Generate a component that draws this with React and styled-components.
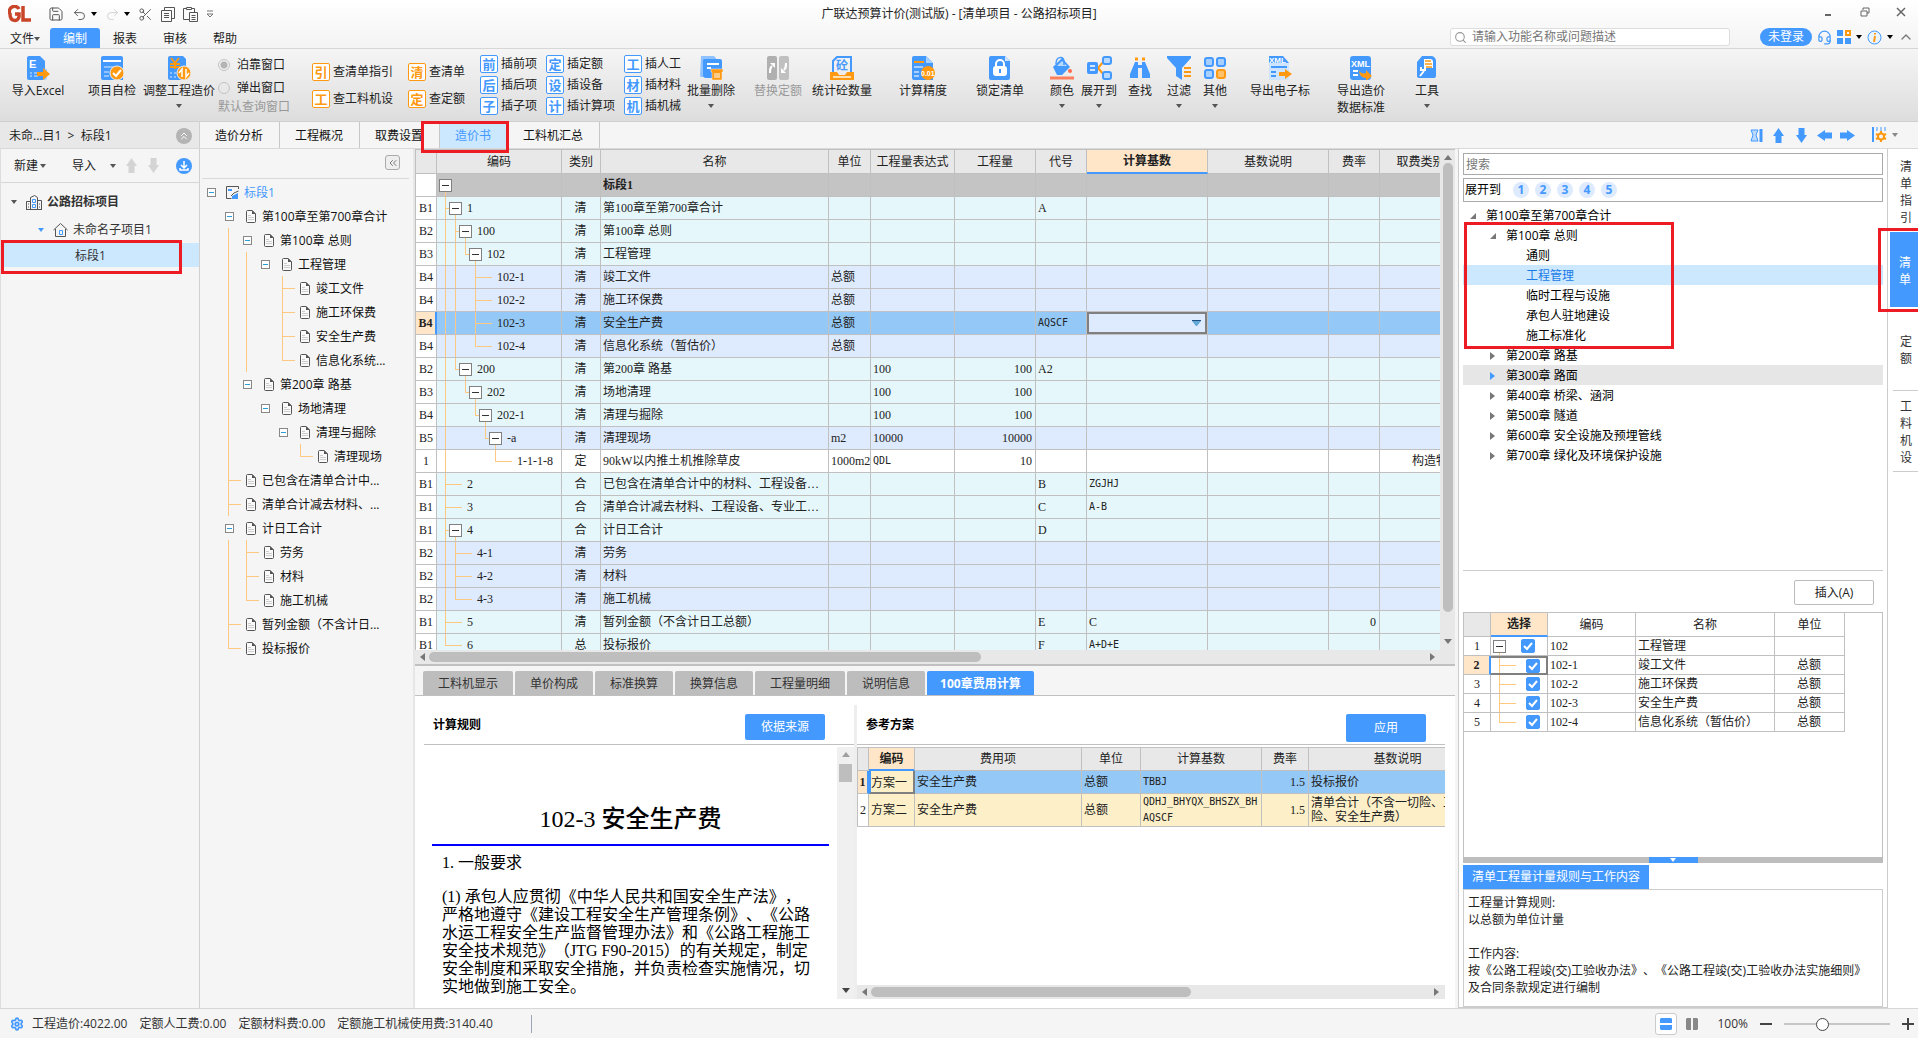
import React, { useState } from "react";
import styled, { createGlobalStyle, css } from "styled-components";
import {
  ChevronsLeft, ChevronsUp, ChevronUp, Headset, Redo2, Save, Scissors, Search, Settings, Undo2,
} from "lucide-react";

const BLUE = "#4499ff";
const ORANGE = "#ff9912";
const LINE = "#ffc880";
const UI = `"Open Sans", "Noto Sans CJK SC", sans-serif`;
const SONG = `"Liberation Serif", "Noto Sans CJK SC", serif`;

const GlobalStyle = createGlobalStyle`
  * { box-sizing: border-box; }
  body {
    margin: 0;
    overflow: hidden;
    font: 12px/16px ${UI};
    color: #222;
    text-spacing-trim: space-all;
  }
  button, input, select { font: inherit; color: inherit; padding: 0; margin: 0; border: 0; background: none; }
  button { white-space: nowrap; cursor: pointer; }
  svg { display: block; flex: none; }
  h1, h2, p, ul { margin: 0; padding: 0; font-weight: 400; list-style: none; }
`;

const Page = styled.div`
  display: flex;
  flex-direction: column;
  height: 100vh;
  overflow: hidden;
  background: #f5f5f5;
`;
const Marker = styled.div`
  position: absolute;
  border: 3px solid #ed1c24;
  pointer-events: none;
  z-index: 5;
`;
const Caret = styled.i`
  flex: none;
  width: 0;
  height: 0;
  border: 3px solid transparent;
  border-bottom-width: 0;
  border-top: 4px solid ${p => p.$color || "#555"};
`;

/* ---- top ---- */
const TopArea = styled.header`
  background: linear-gradient(#fff, #f3f3f3);
  border-bottom: 1px solid #d6d6d6;
`;
const TitleBar = styled.div`
  display: grid;
  grid-template-columns: 1fr auto 1fr;
  align-items: center;
  height: 28px;
`;
const QuickBar = styled.div`
  display: flex;
  align-items: center;
  height: 25px;
  padding-left: 8px;
  gap: 8px;
  color: #555;
  > svg { margin-right: 8px; }
`;
const QuickButton = styled.button`
  display: flex;
  align-items: center;
  gap: 4px;
  color: ${p => (p.disabled ? "#d0d0d0" : "#555")};
`;
const WindowButtons = styled.div`
  display: flex;
  justify-content: flex-end;
  align-items: center;
  gap: 26px;
  padding-right: 12px;
  padding-bottom: 4px;
`;
const MenuBar = styled.nav`
  display: flex;
  align-items: stretch;
  height: 20px;
`;
const MenuItem = styled.button`
  display: flex;
  align-items: center;
  justify-content: center;
  width: 50px;
  padding-top: 2px;
  border-radius: 3px 3px 0 0;
  background: ${p => (p.$active ? BLUE : "none")};
  color: ${p => (p.$active ? "#fff" : "#222")};
`;
const HelpSearch = styled.label`
  display: flex;
  align-items: center;
  gap: 5px;
  width: 280px;
  height: 18px;
  margin: 0 30px 0 auto;
  padding-left: 3px;
  background: #fff;
  border: 1px solid #ddd;
  border-radius: 3px;
  color: #999;
  input { flex: 1; outline: none; }
  input::placeholder { color: #777; }
`;
const Account = styled.div`
  display: flex;
  align-items: center;
  gap: 5px;
  padding-right: 4px;
  height: 18px;
`;
const LoginButton = styled.button`
  width: 52px;
  height: 18px;
  border-radius: 9px;
  background: ${BLUE};
  color: #fff;
`;
const IconButton = styled.button`
  display: flex;
  align-items: center;
  gap: 5px;
  color: ${p => p.$color || BLUE};
`;

/* ---- ribbon ---- */
const Ribbon = styled.div`
  display: flex;
  height: 73px;
  background: linear-gradient(#f5f5f5, #dddddd);
  border-bottom: 1px solid #cfcfcf;
`;
const BigButton = styled.button`
  display: flex;
  flex-direction: column;
  align-items: center;
  flex: none;
  width: ${p => p.$width}px;
  margin-left: ${p => p.$gap || 0}px;
  padding-top: 7px;
  line-height: 17px;
  color: ${p => (p.disabled ? "#999" : "#222")};
  span { margin-top: 2px; white-space: pre; }
  i { margin-top: 5px; }
`;
const DockGroup = styled.div`
  display: flex;
  flex-direction: column;
  width: 87px;
  padding: 4px 0 0 8px;
  color: #999;
  white-space: nowrap;
`;
const DockOption = styled.label`
  display: flex;
  align-items: center;
  gap: 7px;
  height: 24px;
  margin-bottom: -1px;
  color: #222;
  input {
    appearance: none;
    width: 12px;
    height: 12px;
    border: 1px solid #c4c4c4;
    border-radius: 50%;
  }
  input:checked { background: radial-gradient(#b4b4b4 3px, transparent 4px); }
`;
const ToolGrid = styled.div`
  display: grid;
  grid-template-columns: ${p => p.$columns};
  grid-auto-rows: ${p => p.$row}px;
  align-content: center;
  justify-items: start;
  align-items: center;
  margin-left: 15px;
`;
const ToolButton = styled.button`
  display: flex;
  align-items: center;
  gap: 3px;
  b {
    width: 18px;
    height: 18px;
    border: 1px solid ${p => p.$color};
    border-radius: 2px;
    background: #fff;
    color: ${p => p.$color};
    font: 700 13px/15px "Noto Sans CJK SC", sans-serif;
  }
`;

/* ---- page tabs ---- */
const SubHeader = styled.div`
  display: flex;
  height: 27px;
  border-bottom: 1px solid #d9d9d9;
`;
const Crumb = styled.div`
  display: flex;
  align-items: center;
  justify-content: space-between;
  width: 200px;
  padding: 1px 7px 0 9px;
  background: #e8e8e8;
  border-right: 1px solid #d0d0d0;
  white-space: pre;
`;
const RoundButton = styled.button`
  display: flex;
  align-items: center;
  justify-content: center;
  width: 16px;
  height: 16px;
  border-radius: 50%;
  background: ${p => p.$color};
  color: #fff;
`;
const TabSlot = styled.div`
  position: relative;
  display: flex;
`;
const PageTab = styled.button`
  padding: 2px 16px 0 15px;
  border-right: 1px solid ${p => (p.$active ? "#cce8ff" : "#c8c8c8")};
  background: ${p => (p.$active ? "#cce8ff" : "none")};
  color: ${p => (p.$active ? BLUE : "#111")};
`;
const ArrowTools = styled.div`
  display: flex;
  align-items: center;
  gap: 8px;
  margin-left: auto;
  padding-right: 20px;
`;

const Body = styled.main`
  display: flex;
  flex: 1;
  min-height: 0;
`;

/* ---- project panel ---- */
const ProjectPanel = styled.aside`
  flex: none;
  width: 200px;
  border-left: 1px solid #ddd;
  border-right: 1px solid #d0d0d0;
`;
const ProjectTools = styled.div`
  display: flex;
  align-items: center;
  height: 34px;
  padding: 0 7px 0 13px;
  border-bottom: 1px solid #d6d6d6;
  margin-bottom: 4px;
`;
const ProjectButton = styled.button`
  display: flex;
  align-items: center;
  gap: ${p => p.$gap}px;
  margin-right: ${p => p.$after}px;
`;
const ProjectRow = styled.div`
  position: relative;
  display: flex;
  align-items: center;
  gap: 5px;
  height: ${p => (p.$active ? 24 : 28)}px;
  padding-top: 2px;
  padding-left: ${p => p.$indent}px;
  background: ${p => (p.$active ? "#cce8ff" : "none")};
  font-weight: ${p => (p.$bold ? 600 : 400)};
  color: #333;
  svg { margin-left: 4px; }
`;

/* ---- chapter tree ---- */
const ChapterPanel = styled.aside`
  flex: none;
  width: 215px;
  padding: 0 4px 0 2px;
  border-right: 2px solid #e6e6e6;
`;
const ChapterTop = styled.div`
  display: flex;
  justify-content: flex-end;
  align-items: center;
  height: 30px;
  padding: 0 9px 2px 0;
  margin-bottom: 1px;
  border-bottom: 1px solid #d9d9d9;
`;
const CollapseButton = styled.button`
  display: flex;
  align-items: center;
  justify-content: center;
  width: 15px;
  height: 15px;
  border: 1px solid #aaa;
  border-radius: 3px;
  background: #eee;
  color: #777;
`;
const ChapterRow = styled.li`
  display: flex;
  align-items: center;
  height: 24px;
  color: ${p => (p.$root ? BLUE : "#111")};
  white-space: nowrap;
  svg { margin-right: ${p => (p.$root ? 5 : 6)}px; }
`;
const ChapterText = styled.span`
  padding-top: 1px;
`;

/* Connector lines of the trees: v = through, tee = branch, end = last branch */
const lineImage = css`
  background-repeat: no-repeat;
  background-image: ${p => (p.$type ? `linear-gradient(${LINE}, ${LINE}), linear-gradient(${LINE}, ${LINE})` : "none")};
  background-position: ${p => p.$x}px 0, ${p => p.$x}px 50%;
  background-size: 1px ${p => (p.$type === "end" ? "50%" : "100%")}, ${p => (p.$type === "v" ? "0 0" : "100% 1px")};
`;
const Guide = styled.span`
  flex: none;
  align-self: stretch;
  width: ${p => p.$width}px;
  ${lineImage}
`;
const ChapterToggle = styled.button`
  flex: none;
  width: 9px;
  height: 9px;
  margin: 0 ${p => (p.$root ? 10 : 12)}px 0 5px;
  border: 1px solid #888;
  background: linear-gradient(#2aa0d8, #2aa0d8) center / 5px 1px no-repeat #fff;
`;

/* ---- centre ---- */
const Center = styled.section`
  display: flex;
  flex-direction: column;
  flex: 1;
  min-width: 0;
  padding-right: 3px;
`;
const GridArea = styled.div`
  display: flex;
  flex: 1;
  min-height: 0;
  border-top: 1px solid #c0c0c0;
`;
const Clip = styled.div`
  flex: 1;
  min-width: 0;
  overflow: hidden;
`;
const Table = styled.table`
  table-layout: fixed;
  width: ${p => p.$width}px;
  border-collapse: separate;
  border-spacing: 0;
  border-left: 1px solid #c0c0c0;
  border-top: ${p => (p.$top ? "1px solid #c0c0c0" : "0")};
  font-family: ${SONG};
  background: #fff;
`;
const Th = styled.th`
  height: ${p => p.$height || 24}px;
  padding: 0;
  border-right: 1px solid #c0c0c0;
  border-bottom: ${p => (p.$active ? `2px solid ${BLUE}` : "1px solid #c0c0c0")};
  background: ${p => (p.$active ? "#ffe6c8" : p.$plain ? "#fff" : "#e8e8e8")};
  font-weight: ${p => (p.$active ? 700 : 400)};
  white-space: nowrap;
  overflow: hidden;
`;
const Tr = styled.tr`
  background: ${p => p.$color || "#fff"};
`;
const Td = styled.td`
  height: ${p => p.$height || 23}px;
  padding: 0 3px 0 2px;
  border-right: 1px solid #c0c0c0;
  border-bottom: 1px solid #c0c0c0;
  text-align: ${p => p.$align || "left"};
  font-weight: ${p => (p.$bold ? 700 : 400)};
  line-height: 14px;
  white-space: ${p => (p.$wrap ? "pre" : "nowrap")};
  overflow: hidden;
  ${p => p.$code && css`font: 10px/16px "DejaVu Sans Mono", monospace;`}
  ${p => p.$focus && css`
    border: 2px solid #808080;
    border-left-color: ${BLUE};
    border-top-width: 0;
    padding-top: 2px;
  `}
`;
const RowHead = styled(Td)`
  padding: 0;
  text-align: center;
  background: ${p => (p.$active ? "#ffe6c8" : "#fff")};
  border-right: ${p => (p.$active ? `2px solid ${BLUE}` : "1px solid #c0c0c0")};
  font-weight: ${p => (p.$active ? 700 : 400)};
`;
const TreeCell = styled.div`
  display: flex;
  align-items: center;
  height: ${p => p.$height}px;
`;
const ToggleSlot = styled.span`
  display: flex;
  align-items: center;
  align-self: stretch;
  flex: none;
  background: linear-gradient(${LINE}, ${LINE}) 6px 100% / 1px 50% no-repeat;
`;
const Toggle = styled.button`
  width: 13px;
  height: 13px;
  border: 1px solid #808080;
  background: linear-gradient(#333, #333) center / 7px 1px no-repeat #fff;
`;
const TreeText = styled.span`
  margin-left: 5px;
`;
const FeeText = styled.span`
  padding-left: 20px;
`;
const CellSelect = styled.select`
  display: block;
  appearance: none;
  width: 100%;
  height: 22px;
  border: 2px solid #808080;
  border-radius: 0;
  background: url("data:image/svg+xml,%3Csvg xmlns='http://www.w3.org/2000/svg' width='9' height='6'%3E%3Cpath d='M0 0h9v1L5 6H4L0 1z' fill='%235fa8d8'/%3E%3Cpath d='M0 0h9v1H0z' fill='%23205080'/%3E%3C/svg%3E") right 4px center no-repeat #deeafd;
`;
const SelectTd = styled(Td)`
  padding: 0;
`;

const VScroll = styled.div`
  display: flex;
  flex-direction: column;
  align-items: center;
  flex: none;
  width: ${p => p.$width}px;
  padding: 4px 0;
  background: ${p => p.$color};
`;
const HScroll = styled.div`
  display: flex;
  align-items: center;
  flex: none;
  height: 14px;
  padding: 0 4px;
  background: #e8e8e8;
`;
const Thumb = styled.div`
  flex: none;
  background: #bebebe;
  border-radius: ${p => (p.$square ? 0 : 5)}px;
  width: ${p => p.$width};
  height: ${p => p.$height};
  margin: ${p => p.$margin};
`;
const Spacer = styled.div`
  flex: 1;
`;

const DetailTabs = styled.div`
  display: flex;
  align-items: flex-end;
  gap: 2px;
  height: 32px;
  flex: none;
  padding-left: 8px;
  border-top: 2px solid #c0c0c0;
  border-bottom: 1px solid #c0c0c0;
`;
const DetailTab = styled.button`
  height: 24px;
  padding: 1px ${p => (p.$active ? 13 : 15)}px 0;
  border-radius: 2px 2px 0 0;
  background: ${p => (p.$active ? BLUE : "#bdbdbd")};
  color: ${p => (p.$active ? "#fff" : "#333")};
  font-weight: ${p => (p.$active ? 700 : 400)};
`;
const Details = styled.div`
  display: flex;
  flex: none;
  height: 312px;
  background: #fff;
  padding-bottom: 9px;
`;
const RulePane = styled.section`
  display: flex;
  flex-direction: column;
  width: 439px;
  flex: none;
`;
const PaneDivider = styled.div`
  flex: none;
  width: 3px;
  margin-top: 9px;
  background: #eee;
`;
const PlanPane = styled.section`
  display: flex;
  flex-direction: column;
  flex: 1;
  min-width: 0;
  margin-right: 10px;
`;
const PaneHead = styled.div`
  display: flex;
  justify-content: space-between;
  align-items: flex-start;
  flex: none;
  height: 49px;
  padding: 18px ${p => p.$right}px 0 9px;
  margin: 0 0 2px ${p => p.$left}px;
  border-bottom: 1px solid #c0c0c0;
  h2 { font-size: 12px; line-height: 22px; font-weight: 700; color: #000; }
`;
const BlueButton = styled.button`
  width: 80px;
  height: ${p => (p.$tall ? 28 : 26)}px;
  border-radius: 2px;
  background: ${BLUE};
  color: #fff;
`;
const DocScroll = styled.div`
  display: flex;
  flex: 1;
  min-height: 0;
`;
const Doc = styled.article`
  flex: 1;
  min-width: 0;
  padding: 54px 8px 0 17px;
  overflow: hidden;
  font: 16px/18px ${SONG};
  color: #000;
  h1 {
    font-size: 24px;
    line-height: 36px;
    font-weight: 500;
    text-align: center;
    padding-bottom: 7px;
    border-bottom: 2px solid #00f;
  }
  p { padding: 0 16px 0 10px; margin: 8px 0 16px; }
  p + p { margin: 0; }
`;

/* ---- right panel ---- */
const ListPanel = styled.aside`
  display: flex;
  flex-direction: column;
  flex: none;
  width: 430px;
  padding: 4px 4px 0;
  background: #fff;
  border: 1px solid #ccc;
  border-top: 0;
`;
const SearchBox = styled.input`
  flex: none;
  height: 22px;
  padding-left: 2px;
  border: 1px solid #aaa;
  &::placeholder { color: #777; }
`;
const ExpandBar = styled.div`
  display: flex;
  align-items: center;
  flex: none;
  gap: 6px;
  height: 24px;
  margin: 3px 0;
  padding-left: 1px;
  border: 1px solid #aaa;
  color: #000;
  span { margin-right: 6px; }
`;
const LevelButton = styled.button`
  width: 16px;
  height: 16px;
  border-radius: 50%;
  background: #deeafd;
  color: ${BLUE};
  font-weight: 700;
  line-height: 16px;
`;
const ListTree = styled.div`
  flex: 1;
  min-height: 0;
  border-bottom: 1px solid #ccc;
`;
const TreeGroup = styled.div`
  position: relative;
`;
const ListRow = styled.div`
  display: flex;
  align-items: center;
  gap: 9px;
  height: 20px;
  padding-top: 2px;
  padding-left: ${p => 6 + p.$level * 20}px;
  background: ${p => p.$color || "none"};
  color: ${p => (p.$active ? "#1a7be8" : "#000")};
`;
const LeafRow = styled(ListRow)`
  padding-left: 63px;
`;
const InsertBar = styled.div`
  display: flex;
  justify-content: flex-end;
  flex: none;
  padding: 9px 9px 7px;
`;
const InsertButton = styled.button`
  width: 80px;
  height: 25px;
  border: 1px solid #bbb;
  border-radius: 2px;
  background: #fff;
`;
const PickArea = styled.div`
  flex: none;
  height: 245px;
  border: 1px solid #c0c0c0;
  border-bottom: 0;
  table { margin-left: -1px; }
`;
const PickCell = styled(Td)`
  ${p => p.$active && css`
    border: 2px solid #808080;
    border-left: 0;
  `}
`;
const PickCheck = styled.input`
  appearance: none;
  width: 14px;
  height: 14px;
  margin-left: ${p => p.$gap}px;
  border-radius: 2px;
  border: 1px solid ${BLUE};
  &:checked {
    background: url("data:image/svg+xml,%3Csvg xmlns='http://www.w3.org/2000/svg' width='12' height='12'%3E%3Cpath d='M2 6l3 3 5-6' fill='none' stroke='white' stroke-width='2'/%3E%3C/svg%3E") center no-repeat ${BLUE};
  }
`;
const Splitter = styled.div`
  display: flex;
  justify-content: center;
  flex: none;
  height: 6px;
  margin-bottom: 2px;
  background: #bdbdbd;
  span {
    display: flex;
    justify-content: center;
    align-items: center;
    width: 49px;
    background: ${BLUE};
  }
`;
const RuleTab = styled.button`
  align-self: flex-start;
  flex: none;
  height: 24px;
  padding: 0 9px;
  background: ${BLUE};
  color: #fff;
`;
const RuleText = styled.div`
  flex: none;
  height: 118px;
  padding: 4px;
  border: 1px solid #ccc;
  line-height: 17px;
  white-space: pre;
`;
const SideTabs = styled.nav`
  display: flex;
  flex-direction: column;
  flex: none;
  width: 30px;
  padding-left: 2px;
  background: #fff;
`;
const SideSlot = styled.div`
  position: relative;
  display: flex;
  height: ${p => p.$height}px;
`;
const SideTab = styled.button`
  flex: 1;
  margin-left: ${p => (p.$active ? 0 : 3)}px;
  padding: 2px 8px 0 ${p => (p.$active ? 9 : 7)}px;
  line-height: 17px;
  white-space: normal;
  word-break: break-all;
  border-bottom: ${p => (p.$lined ? "1px solid #ccc" : "0")};
  background: ${p => (p.$active ? BLUE : "none")};
  color: ${p => (p.$active ? "#fff" : "#333")};
`;

/* ---- status bar ---- */
const StatusBar = styled.footer`
  display: flex;
  align-items: center;
  flex: none;
  gap: 12px;
  height: 30px;
  padding: 1px 4px 0 10px;
  border-top: 1px solid #d6d6d6;
  background: #f5f5f5;
  color: #333;
`;
const StatusText = styled.div`
  display: flex;
  gap: 12px;
  margin-left: -4px;
`;
const StatusRule = styled.div`
  width: 1px;
  height: 18px;
  margin: 0 auto 0 26px;
  background: #9aa5b5;
`;
const ViewButton = styled.button`
  display: flex;
  align-items: center;
  justify-content: center;
  width: 22px;
  height: 22px;
  margin-right: ${p => (p.$active ? -8 : 2)}px;
  border: 1px solid ${p => (p.$active ? "#ccc" : "transparent")};
  border-radius: 3px;
  background: ${p => (p.$active ? "#fff" : "none")};
`;
const ZoomSlider = styled.input`
  appearance: none;
  width: 106px;
  height: 12px;
  background: linear-gradient(#c6c6c6, #c6c6c6) center / 100% 2px no-repeat;
  &::-webkit-slider-thumb {
    appearance: none;
    width: 13px;
    height: 13px;
    border: 1px solid #444;
    border-radius: 50%;
    background: #fff;
  }
`;

/* ---- red frames over the page ---- */
const TabMarker = styled(Marker)`
  left: -19px;
  top: -1px;
  width: 88px;
  height: 32px;
`;
const RowMarker = styled(Marker)`
  left: 0;
  top: -3px;
  width: 181px;
  height: 34px;
`;
const GroupMarker = styled(Marker)`
  left: 1px;
  top: -3px;
  width: 210px;
  height: 127px;
`;
const SideMarker = styled(Marker)`
  left: -12px;
  top: -4px;
  right: -3px;
  bottom: -5px;
`;

/* ---- drawings ---- */
const Icon = ({ w = 24, h = 24, box, children }) => (
  <svg width={w} height={h} viewBox={box || `0 0 ${w} ${h}`} fill="none" aria-hidden="true">{children}</svg>
);

const svgText = { fontFamily: "Liberation Sans, Noto Sans CJK SC, sans-serif", fontWeight: 700 };

const ICONS = {
  excel: (
    <Icon>
      <path d="M3 0h11l5 5v19H3a2 2 0 0 1-2-2V2a2 2 0 0 1 2-2z" fill={BLUE} />
      <path d="M14 0l7 7v6h-4v11h2a2 2 0 0 0 2-2V7z" fill="#a8d0ff" />
      <text x="3" y="12" fontSize="11" fill="#fff" {...svgText}>E</text>
      <path d="M4 17h2M8 17h4M4 20h2M8 20h4" stroke="#a8d0ff" strokeWidth="1.5" />
      <path d="M11 16h6v-4l7 6-7 6v-4h-6z" fill={ORANGE} />
    </Icon>
  ),
  check: (
    <Icon>
      <path d="M3 0h18a2 2 0 0 1 2 2v22H3a2 2 0 0 1-2-2V2a2 2 0 0 1 2-2z" fill={BLUE} />
      <path d="M3 5h18" stroke="#fff" strokeWidth="2" />
      <path d="M4 11h11M4 16h5M4 20h5" stroke="#a8d0ff" strokeWidth="1.5" />
      <circle cx="17" cy="17" r="7" fill={ORANGE} stroke="#eee" />
      <path d="M13 17l3 3 5-6" stroke="#fff" strokeWidth="2" />
    </Icon>
  ),
  adjust: (
    <Icon>
      <path d="M3 0h13l3 3v21H3a2 2 0 0 1-2-2V2a2 2 0 0 1 2-2z" fill={BLUE} />
      <path d="M4 2l4 5 4-5M3 8h10M3 11h10M8 7v6" stroke={ORANGE} strokeWidth="2" />
      <path d="M3 17h2M3 21h2M7 17h2M7 21h2" stroke="#a8d0ff" strokeWidth="1.5" />
      <circle cx="17" cy="17" r="7" fill={ORANGE} stroke="#eee" />
      <path d="M15 21v-8l-3 4M19 13v8l3-4" stroke="#fff" strokeWidth="1.5" />
    </Icon>
  ),
  batch: (
    <Icon>
      <path d="M2 0h13l2 2v19H2a2 2 0 0 1-1-1z" fill="#90c2ff" />
      <path d="M5 3h16a2 2 0 0 1 2 2v17H7a3 3 0 0 1-3-3V4z" fill={BLUE} />
      <path d="M8 8h12M8 12h4" stroke="#fff" strokeWidth="2" />
      <path d="M12 13h12v3h-1v8H13v-8h-1z" fill={ORANGE} stroke="#eee" strokeWidth=".5" />
      <path d="M16 17v5M18 17v5M20 17v5" stroke="#fff" />
    </Icon>
  ),
  swap: (
    <Icon>
      <rect x="1" width="10" height="24" rx="2" fill="#b0b0b0" />
      <rect x="13" width="10" height="24" rx="2" fill="#c0c0c0" />
      <path d="M4 17c0-4 0-5 2-7" stroke="#fff" strokeWidth="2" />
      <path d="M4 7h5v5z" fill="#fff" />
      <path d="M20 7c0 4 0 5-2 7" stroke="#fff" strokeWidth="2" />
      <path d="M20 17h-5v-5z" fill="#fff" />
    </Icon>
  ),
  concrete: (
    <Icon w={26} box="0 0 26 24">
      <path d="M4 17V5l4-4h14v16" stroke={BLUE} strokeWidth="2" />
      <text x="7" y="14" fontSize="12" fill={BLUE} {...svgText}>砼</text>
      <path d="M1 16h7l2 3h6l2-3h7v8H1z" fill={ORANGE} />
      <path d="M4 21h18" stroke="#ffe0b0" strokeWidth="2" />
    </Icon>
  ),
  precision: (
    <Icon>
      <path d="M3 0h12l7 7v17H3a2 2 0 0 1-2-2V2a2 2 0 0 1 2-2z" fill={BLUE} />
      <path d="M15 0l7 7h-7z" fill="#a8d0ff" />
      <path d="M3 6h10" stroke={ORANGE} strokeWidth="2" />
      <path d="M3 11h9M3 16h5M3 20h5" stroke="#a8d0ff" strokeWidth="2" />
      <circle cx="17" cy="17" r="7" fill={ORANGE} />
      <text x="10" y="20" fontSize="7" fill="#fff" {...svgText}>0.01</text>
    </Icon>
  ),
  lock: (
    <Icon>
      <path d="M3 0h14l5 5v17a2 2 0 0 1-2 2H3a2 2 0 0 1-2-2V2a2 2 0 0 1 2-2z" fill={BLUE} />
      <path d="M17 0l5 5h-5z" fill="#cfe5ff" />
      <rect x="5" y="10" width="14" height="10" rx="3" fill="#fff" />
      <path d="M8 11V8a4 4 0 0 1 8 0v3" stroke="#fff" strokeWidth="2" />
      <path d="M12 13v4" stroke={BLUE} strokeWidth="2" />
    </Icon>
  ),
  color: (
    <Icon>
      <path d="M3 11l9-9 8 9-8 8H7z" fill={BLUE} />
      <path d="M7 10l5-5 5 5z" fill="#b9dafe" />
      <path d="M6 8c0-8 7-8 8-3v4" stroke={BLUE} strokeWidth="1.5" />
      <circle cx="20" cy="15" r="2" fill="#ff6a4a" />
      <path d="M0 22h24" stroke="#ff7f5c" strokeWidth="3" />
    </Icon>
  ),
  expand: (
    <Icon w={26} box="0 0 26 24">
      <path d="M12 12l6-7M12 12l6 7" stroke={ORANGE} strokeWidth="2" />
      <rect x="1" y="6" width="11" height="12" rx="2" fill={BLUE} />
      <path d="M4 10h5M4 14h5" stroke="#cfe5ff" strokeWidth="2" />
      <rect x="17" y="1" width="8" height="7" rx="2" stroke={BLUE} strokeWidth="2" fill="#b9dafe" />
      <rect x="17" y="16" width="8" height="7" rx="2" stroke={BLUE} strokeWidth="2" fill="#b9dafe" />
    </Icon>
  ),
  find: (
    <Icon>
      <path d="M7 6h3v16H2v-4zM14 6h3l5 12v4h-8z" fill={BLUE} />
      <path d="M7 3h3M14 3h3" stroke={ORANGE} strokeWidth="3" />
      <path d="M10 9h4v3h-4z" fill={BLUE} />
    </Icon>
  ),
  filter: (
    <Icon>
      <path d="M0 0h24v2l-9 10v12l-6-4v-8L0 2z" fill={BLUE} />
      <path d="M17 12h7M17 16h7M17 20h7" stroke={ORANGE} strokeWidth="2" />
    </Icon>
  ),
  other: (
    <Icon>
      <rect x="2" y="2" width="8" height="8" rx="2" fill="#a8d0ff" stroke={BLUE} strokeWidth="2" />
      <rect x="14" y="2" width="8" height="8" rx="2" fill="#a8d0ff" stroke={BLUE} strokeWidth="2" />
      <rect x="2" y="14" width="8" height="8" rx="2" fill="#a8d0ff" stroke={BLUE} strokeWidth="2" />
      <rect x="14" y="14" width="8" height="8" rx="2" fill="#ffc26b" stroke={ORANGE} strokeWidth="2" />
    </Icon>
  ),
  xml: (
    <Icon>
      <path d="M1 0h14l6 7v17H1z" fill="#cfe5ff" />
      <path d="M1 0h14l6 7H1z" fill={BLUE} />
      <text x="1" y="7" fontSize="8" fill="#fff" {...svgText}>XML</text>
      <path d="M3 11h16M3 16h5M3 20h5" stroke={BLUE} strokeWidth="2" />
      <path d="M11 16h6v-3l7 5-7 5v-3h-6z" fill={ORANGE} />
    </Icon>
  ),
  standard: (
    <Icon>
      <rect x="1" width="21" height="24" rx="3" fill={BLUE} />
      <text x="2" y="11" fontSize="9" fill="#fff" {...svgText}>XML</text>
      <path d="M4 15h5M4 19h5" stroke="#fff" strokeWidth="2" />
      <path d="M10 14c1 3 4 4 7 3v-3l6 6-6 5v-3c-4 0-7-3-7-8z" fill={ORANGE} />
    </Icon>
  ),
  tool: (
    <Icon>
      <path d="M7 0h9a5 5 0 0 1 5 5v15a2 2 0 0 1-2 2H4a2 2 0 0 1-2-2V6z" fill={BLUE} />
      <path d="M9 3h6a3 3 0 0 1 3 3v6H9z" fill="#fff" />
      <path d="M10 5h6M10 8h7M10 11h7" stroke={ORANGE} strokeWidth="1.5" />
      <path d="M5 20l4-5M6 11v3h4v-4" stroke="#fff" strokeWidth="2" />
    </Icon>
  ),
};

const DocIcon = () => (
  <Icon w={10} h={13}>
    <path d="M.5 1.500a1 1 0 0 1 1-1H6L9.500 4v7.500a1 1 0 0 1-1 1h-7a1 1 0 0 1-1-1z" stroke="#555" fill="#fafafa" />
    <path d="M6 0l4 4H6z" fill="#555" />
    <path d="M2 5.500h3M2 7.500h6M2 9.500h6" stroke="#ccc" />
  </Icon>
);

const Triangle = ({ dir = "up", color = "#777" }) => {
  const paths = { up: "M0 6l4-5 4 5z", down: "M0 1h8L4 6z", left: "M6 0v8L1 4z", right: "M1 0v8l5-4z", open: "M7 1v6H1z" };
  return <Icon w={8} h={8}><path d={paths[dir]} fill={color} /></Icon>;
};

const Arrow = ({ dir, color = BLUE }) => {
  const turn = { up: 0, right: 90, down: 180, left: 270 }[dir];
  return (
    <Icon w={15} h={15}>
      <path d="M7.500 0L13 8H10.500v7h-6V8H2z" fill={color} transform={`rotate(${turn} 7.5 7.5)`} />
    </Icon>
  );
};

/* ---- data ---- */
const ribbonStart = [
  { icon: "excel", label: "导入Excel", width: 76 },
  { icon: "check", label: "项目自检", width: 72 },
  { icon: "adjust", label: "调整工程造价", width: 62, menu: true },
];
const ribbonEnd = [
  { icon: "batch", label: "批量删除", width: 60, menu: true },
  { icon: "swap", label: "替换定额", width: 74, disabled: true },
  { icon: "concrete", label: "统计砼数量", width: 54 },
  { icon: "precision", label: "计算精度", width: 108 },
  { icon: "lock", label: "锁定清单", width: 46 },
  { icon: "color", label: "颜色", width: 36, gap: 21, menu: true },
  { icon: "expand", label: "展开到", width: 38, menu: true },
  { icon: "find", label: "查找", width: 44 },
  { icon: "filter", label: "过滤", width: 34, menu: true },
  { icon: "other", label: "其他", width: 38, menu: true },
  { icon: "xml", label: "导出电子标", width: 92 },
  { icon: "standard", label: "导出造价\n数据标准", width: 70 },
  { icon: "tool", label: "工具", width: 62, menu: true },
];
const lookups = [["引", "查清单指引"], ["清", "查清单"], ["工", "查工料机设"], ["定", "查定额"]];
const inserts = [
  ["前", "插前项"], ["定", "插定额"], ["工", "插人工"],
  ["后", "插后项"], ["设", "插设备"], ["材", "插材料"],
  ["子", "插子项"], ["计", "插计算项"], ["机", "插机械"],
];

// guides: one entry per indent step, last one is the branch of the row itself
const chapters = [
  { text: "标段1", toggle: true, root: true, guides: [] },
  { text: "第100章至第700章合计", toggle: true, guides: [""] },
  { text: "第100章 总则", toggle: true, guides: ["", "v"] },
  { text: "工程管理", toggle: true, guides: ["", "v", "v"] },
  { text: "竣工文件", guides: ["", "v", "v", "", "tee"] },
  { text: "施工环保费", guides: ["", "v", "v", "", "tee"] },
  { text: "安全生产费", guides: ["", "v", "v", "", "tee"] },
  { text: "信息化系统...", guides: ["", "v", "v", "", "end"] },
  { text: "第200章 路基", toggle: true, guides: ["", "v"] },
  { text: "场地清理", toggle: true, guides: ["", "v", ""] },
  { text: "清理与掘除", toggle: true, guides: ["", "v", "", ""] },
  { text: "清理现场", guides: ["", "v", "", "", "", "end"] },
  { text: "已包含在清单合计中...", guides: ["", "tee"] },
  { text: "清单合计减去材料、...", guides: ["", "tee"] },
  { text: "计日工合计", toggle: true, guides: [""] },
  { text: "劳务", guides: ["", "v", "tee"] },
  { text: "材料", guides: ["", "v", "tee"] },
  { text: "施工机械", guides: ["", "v", "end"] },
  { text: "暂列金额（不含计日...", guides: ["", "tee"] },
  { text: "投标报价", guides: ["", "end"] },
];

const CYAN = "#e5f7fb";
const LILAC = "#deeafd";
const columns = [
  ["", 21], ["编码", 125], ["类别", 39], ["名称", 228], ["单位", 42], ["工程量表达式", 84],
  ["工程量", 81], ["代号", 51], ["计算基数", 121], ["基数说明", 121], ["费率", 51], ["取费类别", 82],
];
const items = [
  { head: "", level: 0, open: true, code: "", kind: "", name: "标段1", color: "#c4c4c4", bold: true },
  { head: "B1", level: 1, open: true, code: "1", kind: "清", name: "第100章至第700章合计", symbol: "A", color: CYAN },
  { head: "B2", level: 2, open: true, code: "100", kind: "清", name: "第100章 总则", color: CYAN },
  { head: "B3", level: 3, open: true, code: "102", kind: "清", name: "工程管理", color: CYAN },
  { head: "B4", level: 4, code: "102-1", kind: "清", name: "竣工文件", unit: "总额", color: LILAC },
  { head: "B4", level: 4, code: "102-2", kind: "清", name: "施工环保费", unit: "总额", color: LILAC },
  { head: "B4", level: 4, code: "102-3", kind: "清", name: "安全生产费", unit: "总额", symbol: "AQSCF", color: "#93c8f7", selected: true },
  { head: "B4", level: 4, code: "102-4", kind: "清", name: "信息化系统（暂估价）", unit: "总额", color: LILAC },
  { head: "B2", level: 2, open: true, code: "200", kind: "清", name: "第200章 路基", expr: "100", amount: "100", symbol: "A2", color: CYAN },
  { head: "B3", level: 3, open: true, code: "202", kind: "清", name: "场地清理", expr: "100", amount: "100", color: CYAN },
  { head: "B4", level: 4, open: true, code: "202-1", kind: "清", name: "清理与掘除", expr: "100", amount: "100", color: CYAN },
  { head: "B5", level: 5, open: true, code: "-a", kind: "清", name: "清理现场", unit: "m2", expr: "10000", amount: "10000", color: LILAC },
  { head: "1", level: 6, code: "1-1-1-8", kind: "定", name: "90kW以内推土机推除草皮", unit: "1000m2", expr: "QDL", amount: "10", fee: "构造物", color: "#fff" },
  { head: "B1", level: 1, code: "2", kind: "合", name: "已包含在清单合计中的材料、工程设备…", symbol: "B", base: "ZGJHJ", color: CYAN },
  { head: "B1", level: 1, code: "3", kind: "合", name: "清单合计减去材料、工程设备、专业工…", symbol: "C", base: "A-B", color: CYAN },
  { head: "B1", level: 1, open: true, code: "4", kind: "合", name: "计日工合计", symbol: "D", color: CYAN },
  { head: "B2", level: 2, code: "4-1", kind: "清", name: "劳务", color: LILAC },
  { head: "B2", level: 2, code: "4-2", kind: "清", name: "材料", color: LILAC },
  { head: "B2", level: 2, code: "4-3", kind: "清", name: "施工机械", color: LILAC },
  { head: "B1", level: 1, code: "5", kind: "清", name: "暂列金额（不含计日工总额）", symbol: "E", base: "C", rate: "0", color: CYAN },
  { head: "B1", level: 1, code: "6", kind: "总", name: "投标报价", symbol: "F", base: "A+D+E", color: CYAN },
];

const guidesFor = (rows, index) => {
  const { level } = rows[index];
  const result = [];
  for (let k = 0; k < level; k++) {
    const next = rows.slice(index + 1).find(r => r.level <= k + 1);
    const goesOn = Boolean(next && next.level === k + 1);
    if (k === level - 1) result.push(goesOn ? "tee" : "end");
    else result.push(goesOn ? "v" : "");
  }
  return result;
};

const detailTabs = ["工料机显示", "单价构成", "标准换算", "换算信息", "工程量明细", "说明信息", "100章费用计算"];
const planColumns = [["", 11], ["编码", 46], ["费用项", 167], ["单位", 59], ["计算基数", 121], ["费率", 47], ["基数说明", 178]];
const pickColumns = [["", 27], ["选择", 57], ["编码", 88], ["名称", 139], ["单位", 70]];
const picks = [
  { level: 0, open: true, code: "102", name: "工程管理", unit: "" },
  { level: 1, code: "102-1", name: "竣工文件", unit: "总额" },
  { level: 1, code: "102-2", name: "施工环保费", unit: "总额" },
  { level: 1, code: "102-3", name: "安全生产费", unit: "总额" },
  { level: 1, code: "102-4", name: "信息化系统（暂估价）", unit: "总额" },
];

/* ---- parts ---- */
const Columns = ({ list }) => (
  <colgroup>{list.map(([name, width], i) => <col key={name + i} width={width} />)}</colgroup>
);

const RibbonItems = ({ list }) => list.map(item => (
  <BigButton key={item.label} $width={item.width} $gap={item.gap} disabled={item.disabled}>
    {ICONS[item.icon]}
    <span>{item.label}</span>
    {item.menu && <Caret />}
  </BigButton>
));

const Branch = ({ rows, index, height, children }) => {
  const { open } = rows[index];
  const guides = guidesFor(rows, index);
  return (
    <TreeCell $height={height}>
      {guides.map((type, k) => (
        <Guide key={k} $type={type} $x={6} $width={k === guides.length - 1 && !open ? 23 : 10} />
      ))}
      {open && <ToggleSlot><Toggle aria-label="折叠" /></ToggleSlot>}
      {children}
    </TreeCell>
  );
};

const Top = () => (
  <TopArea>
    <TitleBar>
      <QuickBar>
        <Icon w={24} h={18}>
          <path d="M11 4a5 5 0 0 0-9 5c0 8 8 8 9 3V9H7" stroke="#c8452a" strokeWidth="3.500" />
          <path d="M15 1v14h8" stroke="#c8452a" strokeWidth="3.500" />
        </Icon>
        <QuickButton aria-label="保存"><Save size={16} strokeWidth={1.500} /></QuickButton>
        <QuickButton aria-label="撤销"><Undo2 size={15} strokeWidth={1.500} /><Caret $color="#000" /></QuickButton>
        <QuickButton aria-label="恢复" disabled><Redo2 size={15} strokeWidth={1.500} /><Caret $color="#000" /></QuickButton>
        <QuickButton aria-label="剪切"><Scissors size={15} strokeWidth={1.500} /></QuickButton>
        <QuickButton aria-label="复制">
          <Icon w={14} h={15}>
            <path d="M3.500 3V.5h10v11H11M.5 3.500h10v11H.5zM3 6.500h5M3 8.500h5M3 10.500h5" stroke="#555" />
          </Icon>
        </QuickButton>
        <QuickButton aria-label="粘贴">
          <Icon w={15} h={15}>
            <path d="M6 12.500H.5v-11H3M9 1.500h2.500V5M3.500.5h5v2h-5zM6.500 5.500h8v9h-8zM8.500 8.500h4M8.500 10.500h4M8.500 12.500h4" stroke="#555" />
          </Icon>
        </QuickButton>
        <QuickButton aria-label="更多">
          <Icon w={8} h={8}><path d="M1 1h6M1 4h6L4 7z" stroke="#777" /></Icon>
        </QuickButton>
      </QuickBar>
      <div>广联达预算计价(测试版) - [清单项目 - 公路招标项目]</div>
      <WindowButtons>
        <button aria-label="最小化"><Icon w={10} h={10}><path d="M1 8h6" stroke="#666" strokeWidth="2" /></Icon></button>
        <button aria-label="还原"><Icon w={10} h={10}><path d="M3 3V1h6v5H7M1 4h6v5H1z" stroke="#666" /></Icon></button>
        <button aria-label="关闭"><Icon w={10} h={10}><path d="M1 1l8 8M9 1L1 9" stroke="#666" strokeWidth="1.500" /></Icon></button>
      </WindowButtons>
    </TitleBar>
    <MenuBar>
      <MenuItem>文件<Caret /></MenuItem>
      <MenuItem $active>编制</MenuItem>
      <MenuItem>报表</MenuItem>
      <MenuItem>审核</MenuItem>
      <MenuItem>帮助</MenuItem>
      <HelpSearch>
        <Search size={13} />
        <input placeholder="请输入功能名称或问题描述" aria-label="功能搜索" />
      </HelpSearch>
      <Account>
        <LoginButton>未登录</LoginButton>
        <IconButton aria-label="客服"><Headset size={15} /></IconButton>
        <IconButton aria-label="应用">
          <Icon w={14} h={14}>
            <path d="M0 0h6v6H0zM0 8h6v6H0zM8 8h6v6H8z" fill={BLUE} />
            <path d="M9 1h4v4H9z" stroke={ORANGE} strokeWidth="2" />
          </Icon>
          <Caret $color="#000" />
        </IconButton>
        <IconButton aria-label="信息">
          <Icon w={15} h={15}>
            <circle cx="7.5" cy="7.5" r="6.5" stroke={BLUE} fill="#eaf4ff" />
            <path d="M8 6l-1 6M8 3v1.500" stroke={ORANGE} strokeWidth="2" />
          </Icon>
          <Caret $color="#000" />
        </IconButton>
        <IconButton aria-label="收起" $color="#777"><ChevronUp size={16} /></IconButton>
      </Account>
    </MenuBar>
  </TopArea>
);

const RibbonBar = () => (
  <Ribbon>
    <RibbonItems list={ribbonStart} />
    <DockGroup>
      <DockOption><input type="radio" name="dock" defaultChecked />泊靠窗口</DockOption>
      <DockOption><input type="radio" name="dock" />弹出窗口</DockOption>
      默认查询窗口
    </DockGroup>
    <ToolGrid $columns="96px 57px" $row={27}>
      {lookups.map(([mark, label]) => (
        <ToolButton key={label} $color={ORANGE}><b>{mark}</b>{label}</ToolButton>
      ))}
    </ToolGrid>
    <ToolGrid $columns="66px 78px 57px" $row={21}>
      {inserts.map(([mark, label]) => (
        <ToolButton key={label} $color={BLUE}><b>{mark}</b>{label}</ToolButton>
      ))}
    </ToolGrid>
    <RibbonItems list={ribbonEnd} />
  </Ribbon>
);

const PageTabs = () => (
  <SubHeader>
    <Crumb>
      {"未命...目1  >  标段1"}
      <RoundButton $color="#b4b4b4" aria-label="收起"><ChevronsUp size={12} /></RoundButton>
    </Crumb>
    {["造价分析", "工程概况", "取费设置", "造价书", "工料机汇总"].map(name => (
      <TabSlot key={name}>
        <PageTab $active={name === "造价书"}>{name}</PageTab>
        {name === "造价书" && <TabMarker />}
      </TabSlot>
    ))}
    <ArrowTools>
      <IconButton aria-label="适应">
        <Icon w={14} h={16}>
          <path d="M2 3h7L7 8l2 6H2l2-6z" fill="#b9dafe" stroke={BLUE} />
          <path d="M12 2v13" stroke={BLUE} strokeWidth="3" />
        </Icon>
      </IconButton>
      <IconButton aria-label="上移"><Arrow dir="up" /></IconButton>
      <IconButton aria-label="下移"><Arrow dir="down" /></IconButton>
      <IconButton aria-label="升级"><Arrow dir="left" /></IconButton>
      <IconButton aria-label="降级"><Arrow dir="right" /></IconButton>
      <IconButton aria-label="设置">
        <Icon w={24} h={16}>
          <path d="M10 0v15" stroke={BLUE} strokeWidth="2" />
          <path d="M14 0v4M18 0v4M22 0v4" stroke={BLUE} />
          <path d="M18 4v11M13 7l10 5M13 12l10-5" stroke={ORANGE} strokeWidth="2" />
          <circle cx="18" cy="9.5" r="3" stroke={ORANGE} strokeWidth="2" fill="#f5f5f5" />
        </Icon>
        <Caret $color="#888" />
      </IconButton>
    </ArrowTools>
  </SubHeader>
);

const Project = () => (
  <ProjectPanel>
    <ProjectTools>
      <ProjectButton $gap={2} $after={26}>新建<Caret /></ProjectButton>
      <ProjectButton $gap={14} $after={8}>导入<Caret /></ProjectButton>
      <IconButton aria-label="上移"><Arrow dir="up" color="#d4d4d4" /></IconButton>
      <Guide $width={7} />
      <IconButton aria-label="下移"><Arrow dir="down" color="#d4d4d4" /></IconButton>
      <Spacer />
      <RoundButton $color={BLUE} aria-label="下载">
        <Icon w={10} h={10}><path d="M5 0v6M2 4l3 3 3-3M1 7v2h8V7" stroke="#fff" strokeWidth="1.500" /></Icon>
      </RoundButton>
    </ProjectTools>
    <ProjectRow $indent={10} $bold>
      <Caret />
      <Icon w={16} h={15}>
        <path d="M.5 14.500v-8h4M4.500 14.500V2.500l4-2 3 2v12M11.500 5.500h4v9M0 14.500h16M2 9h1M2 12h1M13 9h1M13 12h1" stroke="#555" />
        <path d="M6.500 4.500h3v3h-3zM6.500 9.500h3v3h-3z" stroke={BLUE} />
      </Icon>
      公路招标项目
    </ProjectRow>
    <ProjectRow $indent={37}>
      <Caret $color={BLUE} />
      <Icon w={15} h={14}>
        <path d="M.5 7L7.500.5l7 6.500M2.500 6v7.500h10V6" stroke="#555" />
        <path d="M6.500 7.500h3v4h-3z" stroke={BLUE} />
      </Icon>
      未命名子项目1
    </ProjectRow>
    <ProjectRow $indent={74} $active>标段1<RowMarker /></ProjectRow>
  </ProjectPanel>
);

const Chapters = () => (
  <ChapterPanel>
    <ChapterTop>
      <CollapseButton aria-label="收起"><ChevronsLeft size={12} /></CollapseButton>
    </ChapterTop>
    <ul>
      {chapters.map(row => (
        <ChapterRow key={row.text} $root={row.root}>
          {row.guides.map((type, k) => (
            <Guide key={k} $type={type} $x={8} $width={!row.toggle && k === row.guides.length - 1 ? 21 : 18} />
          ))}
          {row.toggle
            ? <ChapterToggle $root={row.root} aria-label="折叠" />
            : <Guide $width={5} />}
          {row.root ? (
            <Icon w={13} h={13}>
              <path d="M12.500 3V.5H.5v12h5M12.500 5L8 7l-3 3" stroke="#555" />
              <path d="M6 10l6-3v6H6zM2 3h4v2H2z" fill={BLUE} />
            </Icon>
          ) : <DocIcon />}
          <ChapterText>{row.text}</ChapterText>
        </ChapterRow>
      ))}
    </ul>
  </ChapterPanel>
);

// formulas are set in the narrow code face
const isCode = text => /^[A-Z_+-]{2,}/.test(text || "");

const ItemGrid = () => (
  <GridArea>
    <Clip>
      <Table $width={1047}>
        <Columns list={columns} />
        <thead>
          <tr>
            {columns.map(([name], i) => <Th key={i} $active={name === "计算基数"}>{name}</Th>)}
          </tr>
        </thead>
        <tbody>
          {items.map((item, i) => (
            <Tr key={i} $color={item.color}>
              <RowHead $active={item.selected}>{item.head}</RowHead>
              <Td><Branch rows={items} index={i} height={22}><TreeText>{item.code}</TreeText></Branch></Td>
              <Td $align="center">{item.kind}</Td>
              <Td $bold={item.bold}>{item.name}</Td>
              <Td>{item.unit}</Td>
              <Td $code={isCode(item.expr)}>{item.expr}</Td>
              <Td $align="right">{item.amount}</Td>
              <Td $code={isCode(item.symbol)}>{item.symbol}</Td>
              {item.selected ? (
                <SelectTd><CellSelect aria-label="计算基数"><option /></CellSelect></SelectTd>
              ) : <Td $code={isCode(item.base)}>{item.base}</Td>}
              <Td />
              <Td $align="right">{item.rate}</Td>
              <Td $align="center">{item.fee && <FeeText>{item.fee}</FeeText>}</Td>
            </Tr>
          ))}
        </tbody>
      </Table>
    </Clip>
    <VScroll $width={15} $color="#e8e8e8">
      <Triangle />
      <Thumb $width="10px" $height="449px" $margin="1px 0 0" />
      <Spacer />
      <Triangle dir="down" />
    </VScroll>
  </GridArea>
);

const Rules = () => (
  <RulePane>
    <PaneHead $left={9} $right={29}>
      <h2>计算规则</h2>
      <BlueButton>依据来源</BlueButton>
    </PaneHead>
    <DocScroll>
      <Doc>
        <h1>102-3 安全生产费</h1>
        <p>1. 一般要求</p>
        <p>
          (1) 承包人应贯彻《中华人民共和国安全生产法》，严格地遵守《建设工程安全生产管理条例》、《公路水运工程安全生产监督管理办法》和《公路工程施工安全技术规范》（JTG F90-2015）的有关规定，制定安全制度和采取安全措施，并负责检查实施情况，切实地做到施工安全。
        </p>
      </Doc>
      <VScroll $width={17} $color="#f0f0f0">
        <Triangle color="#a0a0a0" />
        <Thumb $square $width="13px" $height="18px" $margin="5px 0 0" />
        <Spacer />
        <Triangle dir="down" color="#444" />
      </VScroll>
    </DocScroll>
  </RulePane>
);

const PlanCode = styled(Td)`
  background: #fdf0c8;
  padding-right: 0;
  padding-left: ${p => (p.$focus ? 0 : 2)}px;
`;

const Plans = () => (
  <PlanPane>
    <PaneHead $left={0} $right={19}>
      <h2>参考方案</h2>
      <BlueButton $tall>应用</BlueButton>
    </PaneHead>
    <Clip>
      <Table $width={630} $top>
        <Columns list={planColumns} />
        <thead>
          <tr>{planColumns.map(([name], i) => <Th key={i} $height={23} $active={name === "编码"}>{name}</Th>)}</tr>
        </thead>
        <tbody>
          <Tr $color="#93c8f7">
            <RowHead $active>1</RowHead>
            <PlanCode $focus>方案一</PlanCode>
            <Td>安全生产费</Td>
            <Td>总额</Td>
            <Td $code>TBBJ</Td>
            <Td $align="right">1.5</Td>
            <Td>投标报价</Td>
          </Tr>
          <Tr $color="#fdf0c8">
            <RowHead $height={33}>2</RowHead>
            <PlanCode>方案二</PlanCode>
            <Td>安全生产费</Td>
            <Td>总额</Td>
            <Td $code $wrap>{"QDHJ_BHYQX_BHSZX_BH\nAQSCF"}</Td>
            <Td $align="right">1.5</Td>
            <Td $wrap>{"清单合计（不含一切险、工\n险、安全生产费）"}</Td>
          </Tr>
        </tbody>
      </Table>
    </Clip>
    <HScroll>
      <Triangle dir="left" />
      <Thumb $width="320px" $height="10px" $margin="0 0 0 2px" />
      <Spacer />
      <Triangle dir="right" />
    </HScroll>
  </PlanPane>
);

const RightPanel = () => {
  const [checked, setChecked] = useState(picks.map(() => true));
  const flip = i => setChecked(list => list.map((v, k) => (k === i ? !v : v)));

  return (
    <ListPanel>
      <SearchBox placeholder="搜索" aria-label="搜索" />
      <ExpandBar>
        <span>展开到</span>
        {[1, 2, 3, 4, 5].map(n => <LevelButton key={n}>{n}</LevelButton>)}
      </ExpandBar>
      <ListTree>
        <ListRow $level={0}><Triangle dir="open" />第100章至第700章合计</ListRow>
        <TreeGroup>
          <ListRow $level={1}><Triangle dir="open" />第100章 总则</ListRow>
          {["通则", "工程管理", "临时工程与设施", "承包人驻地建设", "施工标准化"].map(name => (
            <LeafRow key={name} $level={2} $active={name === "工程管理"} $color={name === "工程管理" ? "#cce8ff" : ""}>
              {name}
            </LeafRow>
          ))}
          <GroupMarker />
        </TreeGroup>
        {["第200章 路基", "第300章 路面", "第400章 桥梁、涵洞", "第500章 隧道", "第600章 安全设施及预埋管线", "第700章 绿化及环境保护设施"].map((name, i) => (
          <ListRow key={name} $level={1} $color={i === 1 ? "#e6e6e6" : ""}>
            <Triangle dir="right" color={i === 1 ? BLUE : "#777"} />{name}
          </ListRow>
        ))}
      </ListTree>
      <InsertBar><InsertButton>插入(A)</InsertButton></InsertBar>
      <PickArea>
        <Table $width={382}>
          <Columns list={pickColumns} />
          <thead>
            <tr>
              {pickColumns.map(([name], i) => <Th key={i} $active={i === 1} $plain={i > 1}>{name}</Th>)}
            </tr>
          </thead>
          <tbody>
            {picks.map((row, i) => (
              <Tr key={row.code}>
                <RowHead $height={19} $active={i === 1}>{i + 1}</RowHead>
                <PickCell $height={19} $active={i === 1}>
                  <Branch rows={picks} index={i} height={i === 1 ? 15 : 18}>
                    <PickCheck
                      type="checkbox"
                      aria-label={row.name}
                      checked={checked[i]}
                      onChange={() => flip(i)}
                      $gap={row.open ? 15 : 10}
                    />
                  </Branch>
                </PickCell>
                <Td $height={19}>{row.code}</Td>
                <Td $height={19}>{row.name}</Td>
                <Td $height={19} $align="center">{row.unit}</Td>
              </Tr>
            ))}
          </tbody>
        </Table>
      </PickArea>
      <Splitter><span><Icon w={6} h={4}><path d="M0 0h6L3 4z" fill="#fff" /></Icon></span></Splitter>
      <RuleTab>清单工程量计量规则与工作内容</RuleTab>
      <RuleText>
        {"工程量计算规则:\n以总额为单位计量\n\n工作内容:\n按《公路工程竣(交)工验收办法》、《公路工程竣(交)工验收办法实施细则》\n及合同条款规定进行编制"}
      </RuleText>
    </ListPanel>
  );
};

const Status = () => (
  <StatusBar>
    <Settings size={14} color={BLUE} strokeWidth={3} />
    <StatusText>
      <span>工程造价:4022.00</span>
      <span>定额人工费:0.00</span>
      <span>定额材料费:0.00</span>
      <span>定额施工机械使用费:3140.40</span>
    </StatusText>
    <StatusRule />
    <ViewButton $active aria-label="上下布局">
      <Icon w={12} h={12}><path d="M1 0h10l1 1v4H0V1zM0 7h12v4l-1 1H1l-1-1z" fill={BLUE} /></Icon>
    </ViewButton>
    <ViewButton aria-label="左右布局">
      <Icon w={12} h={12}><path d="M1 0h4v12H1l-1-1V1zM7 0h4l1 1v10l-1 1H7z" fill="#888" /></Icon>
    </ViewButton>
    <span>100%</span>
    <IconButton aria-label="缩小"><Icon w={12} h={12}><path d="M0 6h12" stroke="#444" strokeWidth="2" /></Icon></IconButton>
    <ZoomSlider type="range" aria-label="缩放" min="0" max="100" defaultValue="34" />
    <IconButton aria-label="放大"><Icon w={12} h={12}><path d="M0 6h12M6 0v12" stroke="#444" strokeWidth="2" /></Icon></IconButton>
  </StatusBar>
);

const App = () => (
  <Page>
    <GlobalStyle />
    <Top />
    <RibbonBar />
    <PageTabs />
    <Body>
      <Project />
      <Chapters />
      <Center>
        <ItemGrid />
        <HScroll>
          <Triangle dir="left" />
          <Thumb $width="552px" $height="10px" $margin="0 0 0 2px" />
          <Spacer />
          <Triangle dir="right" />
          <Guide $width={14} />
        </HScroll>
        <DetailTabs>
          {detailTabs.map((name, i) => <DetailTab key={name} $active={i === 6}>{name}</DetailTab>)}
        </DetailTabs>
        <Details>
          <Rules />
          <PaneDivider />
          <Plans />
        </Details>
      </Center>
      <RightPanel />
      <SideTabs>
        <SideSlot $height={83}><SideTab>清单指引</SideTab></SideSlot>
        <SideSlot $height={75}><SideTab $active>清单</SideTab><SideMarker /></SideSlot>
        <SideSlot $height={84}><SideTab $lined>定额</SideTab></SideSlot>
        <SideSlot $height={81}><SideTab $lined>工料机设</SideTab></SideSlot>
      </SideTabs>
    </Body>
    <Status />
  </Page>
);

export default App;
